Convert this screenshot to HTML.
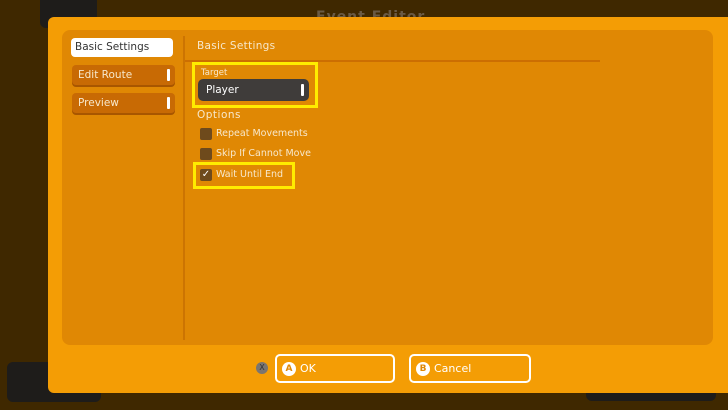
<!DOCTYPE html>
<html><head><style>
body{margin:0;width:728px;height:410px;background:#3f2800;position:relative;overflow:hidden;font-family:"DejaVu Sans","Liberation Sans",sans-serif;}
div,span{position:absolute;box-sizing:border-box;}
.t{color:#f7e8cc;white-space:nowrap;}
.tab{left:72px;width:103px;height:20px;background:#c86a04;border-radius:4px;box-shadow:0 2px 0 #a85600;color:#f7e8cc;font-size:10.5px;padding:4px 0 0 6px;}
.bar{right:5px;top:4px;width:3px;height:12px;background:#fff;border-radius:1px;}
.cb{left:200px;width:12px;height:12px;background:#6e4a1c;border-radius:2px;}
.btn{top:354px;height:29px;border:2px solid #fff;border-radius:5px;color:#fff;font-size:11px;padding:6px 0 0 5px;}
.ci{width:14px;height:14px;border-radius:50%;background:#fff;color:#e08804;font-size:9px;text-align:center;line-height:14px;font-weight:bold;position:static;display:inline-block;margin-right:4px;vertical-align:middle}
</style></head><body>
<div style="left:40px;top:0;width:57px;height:28px;background:#1e1c1a;border-radius:0 0 6px 6px"></div>
<div class="t" style="left:316px;top:9px;font-size:14px;color:#6a5a44;font-weight:bold;letter-spacing:1px">Event Editor</div>
<div style="left:7px;top:362px;width:94px;height:40px;background:#1e1c1a;border-radius:6px"></div>
<div style="left:586px;top:380px;width:130px;height:21px;background:#1e1c1a;border-radius:6px"></div>
<div style="left:48px;top:17px;width:690px;height:376px;background:#f49d05;border-radius:6px"></div>
<div style="left:62px;top:30px;width:651px;height:315px;background:#e08804;border-radius:8px"></div>
<div style="left:183px;top:36px;width:2px;height:304px;background:#cc7402"></div>
<div style="left:185px;top:60px;width:415px;height:2px;background:#cc6e02"></div>
<div style="left:71px;top:38px;width:102px;height:19px;background:#fff;border-radius:4px;color:#333;font-size:10.5px;padding:3px 0 0 4px">Basic Settings</div>
<div class="tab" style="top:65px">Edit Route<span class="bar"></span></div>
<div class="tab" style="top:93px">Preview<span class="bar"></span></div>
<div class="t" style="left:197px;top:40px;font-size:10.5px;letter-spacing:.3px">Basic Settings</div>
<div style="left:192px;top:62px;width:126px;height:46px;border:3px solid #ffec00"></div>
<div class="t" style="left:201px;top:68px;font-size:8.5px">Target</div>
<div style="left:198px;top:79px;width:111px;height:22px;background:#3f3c3a;border-radius:5px;color:#fff;font-size:10.5px;padding:5px 0 0 8px">Player<span class="bar" style="right:5px;top:5px"></span></div>
<div class="t" style="left:197px;top:109px;font-size:10.5px;letter-spacing:.5px">Options</div>
<div class="cb" style="top:128px"></div><div class="t" style="left:216px;top:128px;font-size:9.5px">Repeat Movements</div>
<div class="cb" style="top:148px"></div><div class="t" style="left:216px;top:148px;font-size:9.5px">Skip If Cannot Move</div>
<div style="left:193px;top:162px;width:102px;height:27px;border:3px solid #ffec00"></div>
<div class="cb" style="top:169px;color:#fff;font-size:10px;line-height:12px;text-align:center">✓</div><div class="t" style="left:216px;top:169px;font-size:9.5px">Wait Until End</div>
<div style="left:256px;top:362px;width:12px;height:12px;border-radius:50%;background:#7a7570;color:#333;font-size:8px;text-align:center;line-height:12px">X</div>
<div class="btn" style="left:275px;width:120px"><span class="ci">A</span>OK</div>
<div class="btn" style="left:409px;width:122px"><span class="ci">B</span>Cancel</div>
</body></html>
